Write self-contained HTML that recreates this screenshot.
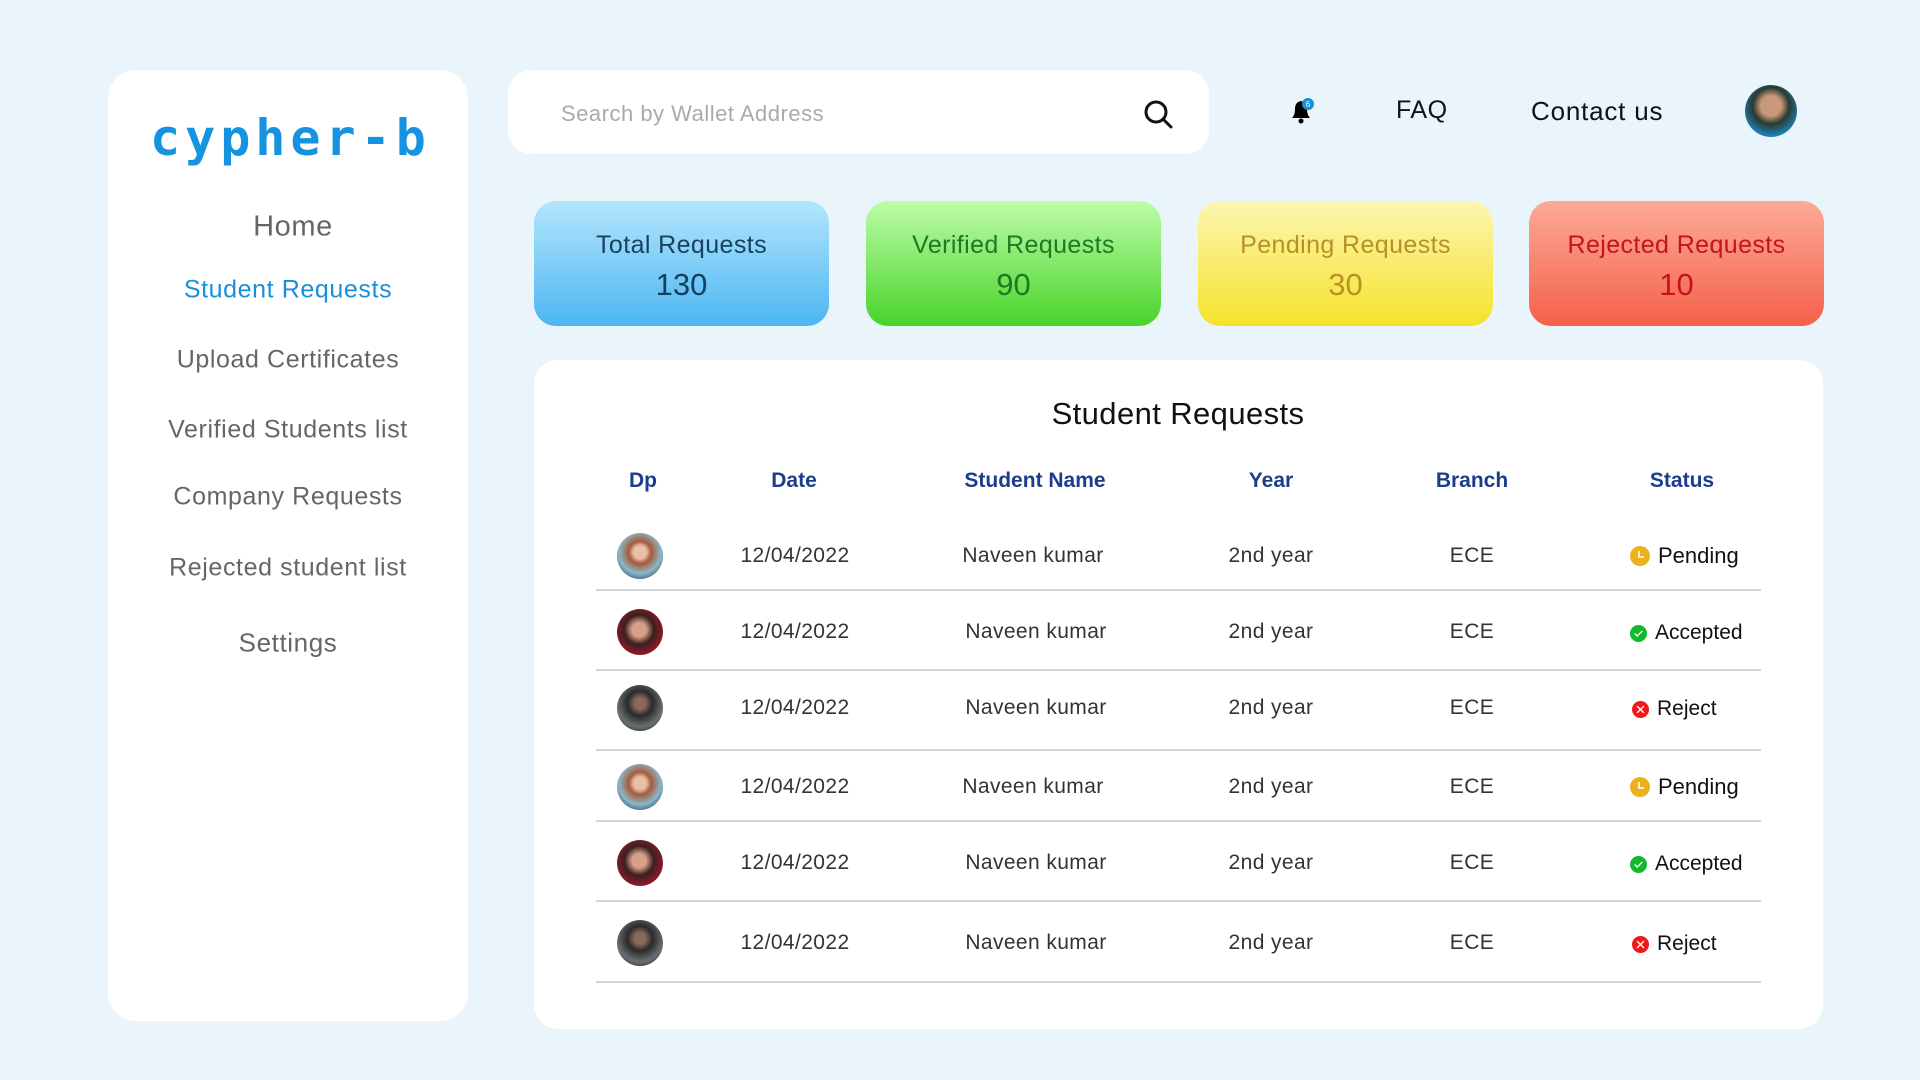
<!DOCTYPE html>
<html><head><meta charset="utf-8"><style>
*{margin:0;padding:0;box-sizing:border-box}
body{width:1920px;height:1080px;background:#eaf4fb;font-family:"Liberation Sans",sans-serif;position:relative;overflow:hidden;color:#222}
.a{position:absolute}
.side{left:108px;top:70px;width:360px;height:951px;background:#fff;border-radius:28px}
.nav{position:absolute;left:108px;width:360px;text-align:center;color:#666;font-size:25px;transform:translateY(-50%);letter-spacing:0.6px}
.search{left:508px;top:70px;width:701px;height:84px;background:#fff;border-radius:24px}
.card{top:201px;width:295px;height:125px;border-radius:22px;text-align:center}
.card .t{position:absolute;left:0;right:0;top:30px;font-size:25px;letter-spacing:0.4px}
.card .n{position:absolute;left:0;right:0;top:66px;font-size:31px}
.tbl{left:534px;top:360px;width:1289px;height:669px;background:#fff;border-radius:24px}
.h{position:absolute;top:481px;transform:translate(-50%,-50%);color:#1c3d8c;font-size:21px;font-weight:bold;white-space:nowrap}
.c{position:absolute;transform:translate(-50%,-50%);color:#333;font-size:21px;white-space:nowrap;letter-spacing:0.4px}
.line{position:absolute;left:596px;width:1165px;height:2px;background:#d6d6d6}
.av{position:absolute;width:46px;height:46px;border-radius:50%;left:617px;transform:translateY(-50%)}
.st{position:absolute;left:1630px;transform:translateY(-50%);font-size:22px;color:#111;display:flex;align-items:center;gap:8px;white-space:nowrap}
</style></head><body>
<div class="a side"></div>
<div class="a" style="left:150px;top:112px;font-size:50px;font-weight:bold;color:#1592e0;letter-spacing:5px;font-family:'DejaVu Sans Mono',monospace;line-height:52px">cypher-b</div>
<div class="nav" style="top:227px;font-size:29px;left:113px">Home</div>
<div class="nav" style="top:290px;color:#1a8fd8">Student Requests</div>
<div class="nav" style="top:360px">Upload Certificates</div>
<div class="nav" style="top:430px">Verified Students list</div>
<div class="nav" style="top:497px">Company Requests</div>
<div class="nav" style="top:568px">Rejected student list</div>
<div class="nav" style="top:643px;font-size:26px">Settings</div>

<div class="a search"></div>
<div class="a" style="left:561px;top:101px;font-size:22px;color:#aaa;letter-spacing:0.5px">Search by Wallet Address</div>
<svg class="a" style="left:1143px;top:99px" width="32" height="32" viewBox="0 0 32 32"><circle cx="13" cy="13" r="10" fill="none" stroke="#111" stroke-width="3"/><line x1="20.5" y1="20.5" x2="28" y2="28" stroke="#111" stroke-width="3" stroke-linecap="round"/></svg>
<svg class="a" style="left:1287px;top:96px" width="30" height="30" viewBox="0 0 30 30"><path d="M5 22 Q8 19 8 13 Q8 6 14 5 Q20 6 20 13 Q20 19 23 22Z" fill="#000"/><circle cx="14" cy="25" r="2.5" fill="#000"/><circle cx="21" cy="8" r="6" fill="#1a8fd8"/><text x="21" y="11" font-size="8" fill="#fff" text-anchor="middle" font-family="Liberation Sans">6</text></svg>
<div class="a" style="left:1396px;top:96px;font-size:25px;color:#111;letter-spacing:0.5px">FAQ</div>
<div class="a" style="left:1531px;top:96px;font-size:26px;color:#111;letter-spacing:0.8px">Contact us</div>
<div class="a" style="left:1745px;top:85px;width:52px;height:52px;border-radius:50%;background:radial-gradient(circle at 50% 40%,#c89878 0 25%,#2a3a30 45%,#1a90d0 80%)"></div>

<div class="a card" style="left:534px;background:linear-gradient(#b3e6fd,#4db6f2)"><div class="t" style="color:#1a4060">Total Requests</div><div class="n" style="color:#13405f">130</div></div>
<div class="a card" style="left:866px;background:linear-gradient(#bdfca8,#48d42a)"><div class="t" style="color:#1b7a22">Verified Requests</div><div class="n" style="color:#1b7a22">90</div></div>
<div class="a card" style="left:1198px;background:linear-gradient(#fbf7b0,#f6e22a)"><div class="t" style="color:#b89028">Pending Requests</div><div class="n" style="color:#b89028">30</div></div>
<div class="a card" style="left:1529px;background:linear-gradient(#fcaa98,#f4614a)"><div class="t" style="color:#c4141a">Rejected Requests</div><div class="n" style="color:#c4141a">10</div></div>

<div class="a tbl"></div>
<div class="c" style="left:1178px;top:414px;font-size:31px;color:#111">Student Requests</div>
<div class="h" style="left:643px">Dp</div>
<div class="h" style="left:794px">Date</div>
<div class="h" style="left:1035px">Student Name</div>
<div class="h" style="left:1271px">Year</div>
<div class="h" style="left:1472px">Branch</div>
<div class="h" style="left:1682px">Status</div>

<div class="line" style="top:589px"></div>
<div class="line" style="top:669px"></div>
<div class="line" style="top:749px"></div>
<div class="line" style="top:820px"></div>
<div class="line" style="top:900px"></div>
<div class="line" style="top:981px"></div>

<div class="av" style="top:556px;background:radial-gradient(circle at 50% 42%,#e8c0a8 0 18%,#a85a3a 32%,#8ab8c8 60%,#2a3a5a 90%)"></div>
<div class="av" style="top:632px;background:radial-gradient(circle at 48% 45%,#d8a088 0 20%,#3a2020 42%,#9a1a28 75%)"></div>
<div class="av" style="top:708px;background:radial-gradient(circle at 50% 40%,#8a6a5a 0 15%,#2a2a2a 35%,#6a7070 65%,#222 90%)"></div>
<div class="av" style="top:787px;background:radial-gradient(circle at 50% 42%,#e8c0a8 0 18%,#a85a3a 32%,#8ab8c8 60%,#2a3a5a 90%)"></div>
<div class="av" style="top:863px;background:radial-gradient(circle at 48% 45%,#d8a088 0 20%,#3a2020 42%,#9a1a28 75%)"></div>
<div class="av" style="top:943px;background:radial-gradient(circle at 50% 40%,#8a6a5a 0 15%,#2a2a2a 35%,#6a7070 65%,#222 90%)"></div>

<div class="c" style="left:795px;top:556px">12/04/2022</div><div class="c" style="left:1033px;top:556px">Naveen kumar</div><div class="c" style="left:1271px;top:556px">2nd year</div><div class="c" style="left:1472px;top:556px">ECE</div>
<div class="c" style="left:795px;top:632px">12/04/2022</div><div class="c" style="left:1036px;top:632px">Naveen kumar</div><div class="c" style="left:1271px;top:632px">2nd year</div><div class="c" style="left:1472px;top:632px">ECE</div>
<div class="c" style="left:795px;top:708px">12/04/2022</div><div class="c" style="left:1036px;top:708px">Naveen kumar</div><div class="c" style="left:1271px;top:708px">2nd year</div><div class="c" style="left:1472px;top:708px">ECE</div>
<div class="c" style="left:795px;top:787px">12/04/2022</div><div class="c" style="left:1033px;top:787px">Naveen kumar</div><div class="c" style="left:1271px;top:787px">2nd year</div><div class="c" style="left:1472px;top:787px">ECE</div>
<div class="c" style="left:795px;top:863px">12/04/2022</div><div class="c" style="left:1036px;top:863px">Naveen kumar</div><div class="c" style="left:1271px;top:863px">2nd year</div><div class="c" style="left:1472px;top:863px">ECE</div>
<div class="c" style="left:795px;top:943px">12/04/2022</div><div class="c" style="left:1036px;top:943px">Naveen kumar</div><div class="c" style="left:1271px;top:943px">2nd year</div><div class="c" style="left:1472px;top:943px">ECE</div>

<div class="st" style="top:556px"><svg width="20" height="20" viewBox="0 0 20 20"><circle cx="10" cy="10" r="10" fill="#ecb21c"/><path d="M9 5V11H14" stroke="#fff" stroke-width="1.6" fill="none"/></svg>Pending</div>
<div class="st" style="top:633px;font-size:21px"><svg width="17" height="17" viewBox="0 0 20 20"><circle cx="10" cy="10" r="10" fill="#13b82e"/><path d="M5.5 10L8.5 13L14.5 7" stroke="#fff" stroke-width="1.6" fill="none"/></svg>Accepted</div>
<div class="st" style="top:709px;font-size:21px;left:1632px"><svg width="17" height="17" viewBox="0 0 20 20"><circle cx="10" cy="10" r="10" fill="#f01818"/><path d="M6 6L14 14M14 6L6 14" stroke="#fff" stroke-width="1.6"/></svg>Reject</div>
<div class="st" style="top:787px"><svg width="20" height="20" viewBox="0 0 20 20"><circle cx="10" cy="10" r="10" fill="#ecb21c"/><path d="M9 5V11H14" stroke="#fff" stroke-width="1.6" fill="none"/></svg>Pending</div>
<div class="st" style="top:864px;font-size:21px"><svg width="17" height="17" viewBox="0 0 20 20"><circle cx="10" cy="10" r="10" fill="#13b82e"/><path d="M5.5 10L8.5 13L14.5 7" stroke="#fff" stroke-width="1.6" fill="none"/></svg>Accepted</div>
<div class="st" style="top:944px;font-size:21px;left:1632px"><svg width="17" height="17" viewBox="0 0 20 20"><circle cx="10" cy="10" r="10" fill="#f01818"/><path d="M6 6L14 14M14 6L6 14" stroke="#fff" stroke-width="1.6"/></svg>Reject</div>
</body></html>
